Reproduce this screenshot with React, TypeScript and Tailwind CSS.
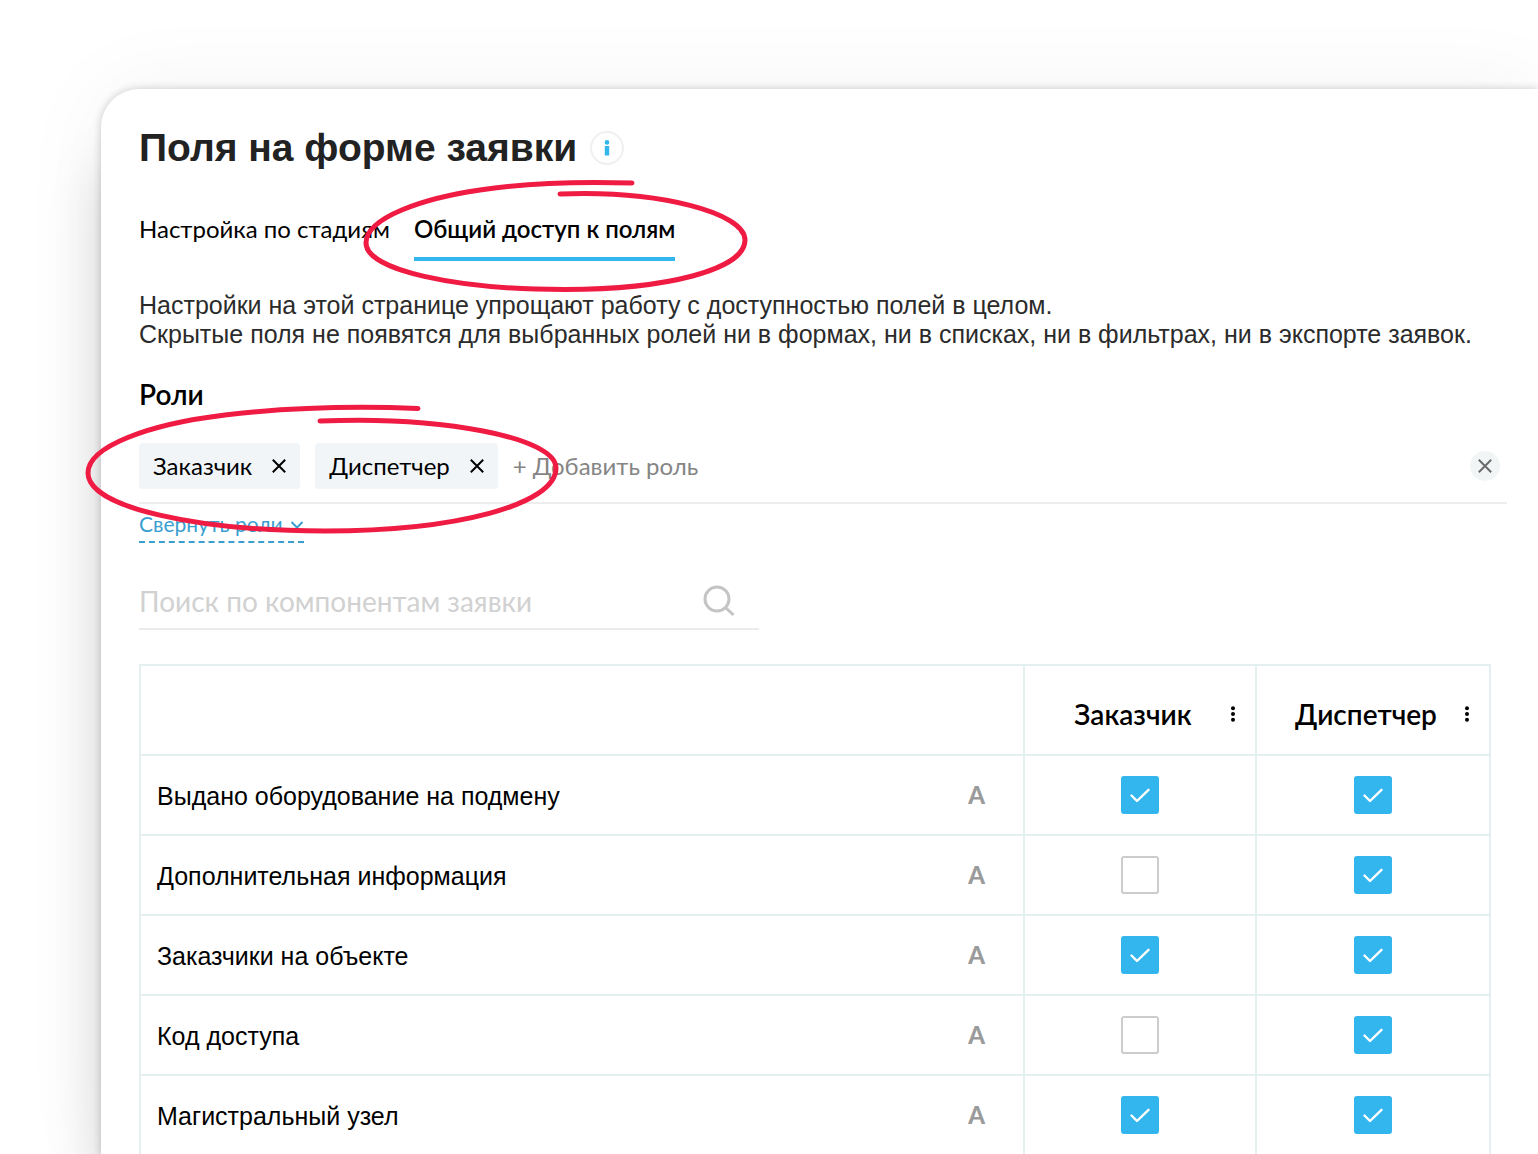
import { useState } from "react";

type Field = { name: string; customer: boolean; dispatcher: boolean };

const initialFields: Field[] = [
  { name: "Выдано оборудование на подмену", customer: true, dispatcher: true },
  { name: "Дополнительная информация", customer: false, dispatcher: true },
  { name: "Заказчики на объекте", customer: true, dispatcher: true },
  { name: "Код доступа", customer: false, dispatcher: true },
  { name: "Магистральный узел", customer: true, dispatcher: true },
];

function Cross({ className }: { className: string }) {
  return (
    <svg viewBox="0 0 14 14" className={className} fill="none" stroke="currentColor" aria-hidden="true">
      <path d="M0.800 0.800 L13.200 13.200 M13.200 0.800 L0.800 13.200" strokeWidth="2" />
    </svg>
  );
}

function RoleChip({ name }: { name: string }) {
  return (
    <li className="flex h-[46px] items-center gap-5 rounded bg-[#f2f5f7] px-[14px] text-[24px] text-black">
      {name}
      <button type="button" aria-label={`Удалить роль ${name}`}>
        <Cross className="size-[14px]" />
      </button>
    </li>
  );
}

function RoleHeader({ name }: { name: string }) {
  return (
    <div className="flex items-center pt-2 pr-[18px] pl-3">
      <span className="flex-1 text-center text-[28px] font-semibold">{name}</span>
      <button type="button" aria-label={`Действия: ${name}`}>
        <svg viewBox="0 0 8 16" className="h-4 w-2" fill="currentColor" aria-hidden="true">
          <circle cx="4" cy="2.2" r="2" />
          <circle cx="4" cy="8" r="2" />
          <circle cx="4" cy="13.8" r="2" />
        </svg>
      </button>
    </div>
  );
}

function CheckBox({ label, checked, onChange }: { label: string; checked: boolean; onChange: () => void }) {
  return (
    <label className="mx-auto grid size-[38px] cursor-pointer">
      <input
        type="checkbox"
        aria-label={label}
        checked={checked}
        onChange={onChange}
        className="peer col-start-1 row-start-1 size-[38px] cursor-pointer appearance-none rounded-[3px] border-2 border-[#cccccc] bg-white checked:border-[#33b5ed] checked:bg-[#33b5ed]"
      />
      <svg
        viewBox="0 0 38 38"
        className="pointer-events-none invisible col-start-1 row-start-1 size-[38px] peer-checked:visible"
        fill="none"
        stroke="white"
        strokeWidth="2.4"
        strokeLinecap="round"
        strokeLinejoin="round"
        aria-hidden="true"
      >
        <path d="M10.500 19.500 L16 25 L27.500 13.800" />
      </svg>
    </label>
  );
}

export default function App() {
  const [fields, setFields] = useState(initialFields);
  const toggle = (index: number, key: "customer" | "dispatcher") =>
    setFields(fields.map((f, i) => (i === index ? { ...f, [key]: !f[key] } : f)));

  return (
    <div className="overflow-hidden bg-white pt-[89px] pl-[101px] font-['Lato',sans-serif] text-black">
      <main className="rounded-tl-[38px] bg-white pt-[38px] pr-[31px] pl-[38px] shadow-[0_0_8px_rgba(0,0,0,0.2),0_70px_56px_rgba(0,0,0,0.15),0_0_90px_rgba(0,0,0,0.05)]">
        <header className="flex items-center gap-[13px] font-['Liberation_Sans',Arial,sans-serif]">
          <h1 className="text-[39px] leading-[42px] font-bold text-[#222222]">Поля на форме заявки</h1>
          <button
            type="button"
            aria-label="Информация"
            className="grid size-[34px] place-items-center rounded-full border-2 border-[#f0f0f0] text-[#33b5ed]"
          >
            <svg viewBox="0 0 6 16" className="h-4 w-1.5" fill="currentColor" aria-hidden="true">
              <circle cx="3" cy="2.4" r="2.3" />
              <rect x="0.8" y="6" width="4.4" height="9.5" />
            </svg>
          </button>
        </header>

        <nav className="mt-[43px] flex gap-6 text-[24px] leading-[34px]">
          <button type="button" className="self-start">
            Настройка по стадиям
          </button>
          <div className="relative">
            <button type="button" aria-current="page" className="border-b-4 border-[#33b5ed] pb-[11px] font-semibold">
              Общий доступ к полям
            </button>
            <svg
              viewBox="360 177 392 118"
              className="pointer-events-none absolute -top-[35px] -left-[54px] h-[118px] w-[392px]"
              fill="none"
              stroke="#ef1b43"
              strokeWidth="5"
              strokeLinecap="round"
              strokeLinejoin="round"
              aria-hidden="true"
            >
              <path d="M632 183 C580 181.500 525 183 480 190 C425 198 366 217 366 243 C366 270 455 289.500 565 289.500 C665 289.500 745 270 745 240 C745 213 660 190 560 194" />
            </svg>
          </div>
        </nav>

        <p className="mt-[30px] font-['Liberation_Sans',Arial,sans-serif] text-[25px] leading-[29px] text-[#2b2b2b]">
          Настройки на этой странице упрощают работу с доступностью полей в целом.
          <br />
          Скрытые поля не появятся для выбранных ролей ни в формах, ни в списках, ни в фильтрах, ни в экспорте заявок.
        </p>

        <section>
          <h2 className="mt-7 text-[28px] leading-[34px] font-semibold">Роли</h2>
          <div className="relative">
            <div className="mt-8 flex items-center gap-[15px] border-b-2 border-[#ededed] pb-[13px]">
              <ul className="flex gap-[15px]">
                <RoleChip name="Заказчик" />
                <RoleChip name="Диспетчер" />
              </ul>
              <button type="button" className="text-[24px] text-[#858585]">
                + Добавить роль
              </button>
              <button
                type="button"
                aria-label="Очистить роли"
                className="mr-[7px] ml-auto grid size-[30px] place-items-center rounded-full bg-[#f2f5f6] text-[#6b6b6b]"
              >
                <Cross className="size-[14px]" />
              </button>
            </div>
            <svg
              viewBox="82 402 480 134"
              className="pointer-events-none absolute -top-[41px] -left-[57px] h-[134px] w-[480px]"
              fill="none"
              stroke="#ef1b43"
              strokeWidth="5"
              strokeLinecap="round"
              strokeLinejoin="round"
              aria-hidden="true"
            >
              <path d="M418 408.500 C355 406 285 408 225 415 C150 424 88 446 88 473 C88 508 200 531 325 531 C455 531 556 505 556 468 C556 437 440 416 320 421" />
            </svg>
          </div>
          <button
            type="button"
            className="mt-[6px] flex items-center gap-[7px] border-b-2 border-dashed border-[#3a9fd0] pb-[3px] text-[21px] leading-[28px] text-[#3a9fd0]"
          >
            Свернуть роли
            <svg viewBox="0 0 14 10" className="h-2.5 w-[14px]" fill="none" stroke="currentColor" aria-hidden="true">
              <path d="M1.500 3 L7 8.500 L12.500 3" strokeWidth="2" />
            </svg>
          </button>
        </section>

        <label className="mt-[30px] flex h-[57px] w-[620px] items-center border-b-2 border-[#ebebeb] pr-6">
          <input
            type="search"
            aria-label="Поиск по компонентам заявки"
            placeholder="Поиск по компонентам заявки"
            className="min-w-0 flex-1 text-[28px] leading-[34px] outline-none placeholder:text-[#d1d1d1]"
          />
          <svg viewBox="0 0 32 32" className="size-8" fill="none" stroke="#c4c4c4" strokeWidth="3" aria-hidden="true">
            <circle cx="14" cy="14" r="12" />
            <path d="M22.500 22.500 L30.500 30" />
          </svg>
        </label>

        <div className="mt-[34px] pr-4">
          <table className="w-full table-fixed border-collapse border-2 border-[#e4efef] [&_td]:border-2 [&_td]:border-[#e4efef] [&_th]:border-2 [&_th]:border-[#e4efef]">
            <colgroup>
              <col />
              <col className="w-[232px]" />
              <col className="w-[234px]" />
            </colgroup>
            <thead>
              <tr className="h-[90px]">
                <td />
                <th scope="col">
                  <RoleHeader name="Заказчик" />
                </th>
                <th scope="col">
                  <RoleHeader name="Диспетчер" />
                </th>
              </tr>
            </thead>
            <tbody>
              {fields.map((field, i) => (
                <tr key={field.name} className="h-20">
                  <th scope="row" className="pr-[38px] pl-4 text-left font-normal">
                    <div className="flex items-center justify-between">
                      <span className="pt-0.5 font-['Liberation_Sans',Arial,sans-serif] text-[25px] leading-[30px]">
                        {field.name}
                      </span>
                      <span className="text-[24px] leading-[30px] font-black text-[#9b9b9b]">А</span>
                    </div>
                  </th>
                  <td>
                    <CheckBox
                      label={`${field.name}: Заказчик`}
                      checked={field.customer}
                      onChange={() => toggle(i, "customer")}
                    />
                  </td>
                  <td>
                    <CheckBox
                      label={`${field.name}: Диспетчер`}
                      checked={field.dispatcher}
                      onChange={() => toggle(i, "dispatcher")}
                    />
                  </td>
                </tr>
              ))}
            </tbody>
          </table>
        </div>
      </main>
    </div>
  );
}
